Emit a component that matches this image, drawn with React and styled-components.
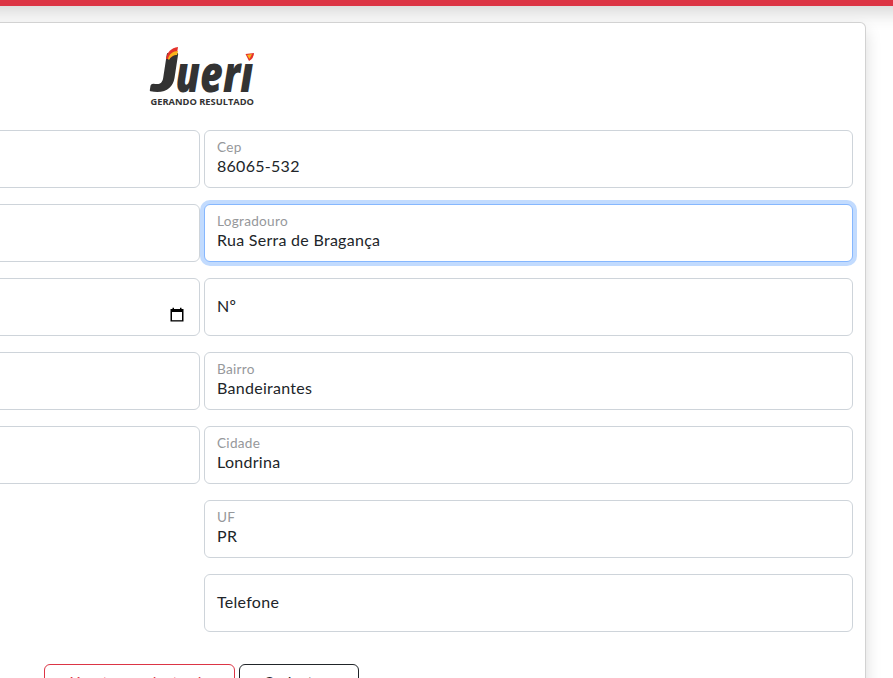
import React from "react";
import styled, { createGlobalStyle, css } from "styled-components";

const Global = createGlobalStyle`
  *, *::before, *::after { box-sizing: border-box; }
  body { margin: 0; background: #fff; color: #212529; font: 400 16px/1.5 Lato, "Open Sans", sans-serif; overflow: hidden; }
`;

const Page = styled.div`
  width: 893px;
  height: 678px;
  overflow: hidden;
`;
const TopBar = styled.header`
  height: 56px;
  margin: -50px -30px 0;
  background: #dc3545;
  box-shadow: 0 8px 16px rgba(0, 0, 0, 0.15);
`;
const Card = styled.main`
  position: relative;
  width: 1330px;
  height: 760px;
  margin: 16px 0 0 -464px;
  padding: 24px 12px;
  background: #fff;
  border: 1px solid rgba(0, 0, 0, 0.175);
  border-radius: 6px;
  box-shadow: 0 8px 16px rgba(0, 0, 0, 0.15);
`;
const LogoRow = styled.div`
  display: flex;
  justify-content: center;
  height: 83px;
  padding-left: 3px;
`;
const Logo = styled.svg`
  display: block;
  width: 106px;
  height: 62px;
  overflow: visible;
`;
const Columns = styled.div`
  display: grid;
  grid-template-columns: 651px 649px;
  column-gap: 4px;
  align-items: start;
`;
const Column = styled.div`
  display: grid;
  row-gap: 16px;
`;
const Field = styled.label`
  display: flex;
  flex-direction: column;
  justify-content: center;
  height: 58px;
  padding: 0 12px ${(p) => (p.$filled ? 4 : 2)}px;
  border: 1px solid #ced4da;
  border-radius: 6px;
  background: #fff;
  ${(p) => p.$focused && css`
    border-color: #86b7fe;
    box-shadow: 0 0 0 4px rgba(13, 110, 253, 0.25);
  `}
`;
const Caption = styled.span`
  font-size: 13.6px;
  line-height: 18px;
  letter-spacing: 0.28px;
  color: #96989b;
`;
const Value = styled.span`
  font-size: 16px;
  line-height: 20px;
  letter-spacing: 0.28px;
`;
const DateIcon = styled.svg`
  align-self: flex-end;
  width: 14px;
  height: 15px;
  margin: 17px 3px 0 0;
`;
const Actions = styled.div`
  display: flex;
  justify-content: center;
  gap: 4px;
  margin-top: 32px;
`;
const Button = styled.button`
  width: ${(p) => p.$width}px;
  height: 38px;
  padding: 0 0 2px;
  font: inherit;
  letter-spacing: 0.3px;
  color: ${(p) => p.$color};
  background: #fff;
  border: 1px solid ${(p) => p.$color};
  border-radius: 6px;
`;

const address = [
  { label: "Cep", value: "86065-532" },
  { label: "Logradouro", value: "Rua Serra de Bragança", focused: true },
  { label: "Nº" },
  { label: "Bairro", value: "Bandeirantes" },
  { label: "Cidade", value: "Londrina" },
  { label: "UF", value: "PR" },
  { label: "Telefone" },
];

function JueriLogo() {
  return (
    <Logo viewBox="0 0 106 62" role="img" aria-label="Jueri">
      <text x="2" y="44" fontFamily="Lato" fontWeight="900" fontStyle="italic" fontSize="51" textLength="26" lengthAdjust="spacingAndGlyphs" fill="#333" stroke="#333" strokeWidth="1.8" strokeLinejoin="round">J</text>
      <text x="25.500" y="44.500" fontFamily="Open Sans" fontWeight="800" fontStyle="italic" fontSize="51" textLength="77.500" lengthAdjust="spacingAndGlyphs" fill="#333">ueri</text>
      <path d="M92 2h15v12.500H92z" fill="#fff" />
      <path d="M95.500 7L104 6Q104 11 99 14Z" fill="#e5322b" />
      <path d="M97 8L102 7L99.500 12Z" fill="#f9b51b" />
      <path d="M16 12C17 5 21 1 28 0L27 6L19 12Z" fill="#e5322b" />
      <path d="M18 12C19 7 23 4 28 4L27 8C24 8 21 9 19 13Z" fill="#f9b51b" />
      <text x="0.500" y="57.500" fontFamily="Open Sans" fontWeight="700" fontSize="9.600" textLength="103.500" lengthAdjust="spacingAndGlyphs" fill="#333">GERANDO RESULTADO</text>
    </Logo>
  );
}

export default function App() {
  return (
    <Page>
      <Global />
      <TopBar />
      <Card>
        <LogoRow><JueriLogo /></LogoRow>
        <Columns>
          <Column>
            {[0, 1, 2, 3, 4].map((i) => (
              <Field key={i}>
                {i === 2 && (
                  <DateIcon viewBox="0 0 14 15">
                    <path d="M0.500 2h13v12.500H0.500zM2.500 0.800h1.500V2H2.500zM10 .8H11.500V2H10z" fill="#000" />
                    <path d="M2 5h10v8.200H2z" fill="#fff" />
                  </DateIcon>
                )}
              </Field>
            ))}
          </Column>
          <Column>
            {address.map((f) => (
              <Field key={f.label} $focused={f.focused} $filled={Boolean(f.value)}>
                {f.value ? <><Caption>{f.label}</Caption><Value>{f.value}</Value></> : <Value>{f.label}</Value>}
              </Field>
            ))}
          </Column>
        </Columns>
        <Actions>
          <Button $width={191} $color="#dc3545">Já estou cadastrado</Button>
          <Button $width={120} $color="#212529">Cadastrar</Button>
        </Actions>
      </Card>
    </Page>
  );
}
